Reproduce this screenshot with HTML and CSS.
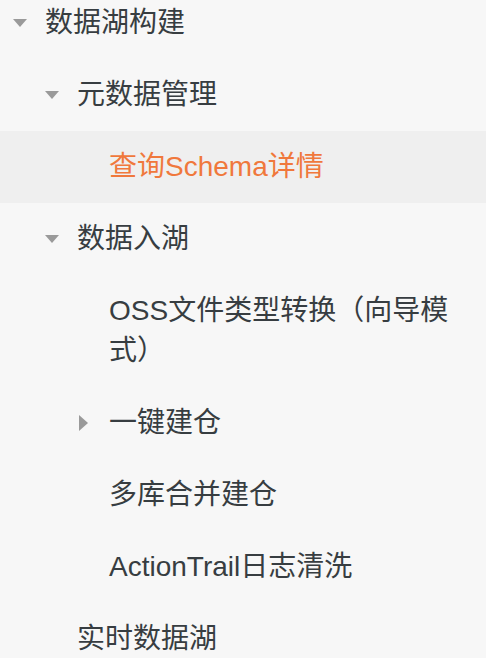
FILE: index.html
```html
<!DOCTYPE html>
<html lang="zh-CN">
<head>
<meta charset="utf-8">
<link rel="stylesheet" href="styles.css">
</head>
<body>
<nav class="tree">
  <div class="row lvl1"><span class="arrow down"></span><span class="label">数据湖构建</span></div>
  <div class="row lvl2"><span class="arrow down"></span><span class="label">元数据管理</span></div>
  <div class="row lvl3 active"><span class="arrow none"></span><span class="label">查询Schema详情</span></div>
  <div class="row lvl2"><span class="arrow down"></span><span class="label">数据入湖</span></div>
  <div class="row lvl3"><span class="arrow none"></span><span class="label">OSS文件类型转换（向导模式）</span></div>
  <div class="row lvl3"><span class="arrow right"></span><span class="label">一键建仓</span></div>
  <div class="row lvl3"><span class="arrow none"></span><span class="label">多库合并建仓</span></div>
  <div class="row lvl3"><span class="arrow none"></span><span class="label">ActionTrail日志清洗</span></div>
  <div class="row lvl2"><span class="arrow none"></span><span class="label">实时数据湖</span></div>
</nav>
</body>
</html>
```

FILE: styles.css
```css
html, body {
  margin: 0;
  padding: 0;
  background: #f7f7f7;
  overflow: hidden;
}
body {
  font-family: "Liberation Sans", "Noto Sans CJK SC", sans-serif;
  font-size: 28px;
  color: #373d41;
}
.tree {
  margin-top: -13px;
  display: flex;
  flex-direction: column;
}
.row {
  display: flex;
  align-items: flex-start;
  padding: 16px 16px 16px 0;
  line-height: 40px;
}
.row.active {
  background: #efefef;
  color: #f0783c;
}
.lvl1 { padding-left: 13px; }
.lvl2 { padding-left: 45px; }
.lvl3 { padding-left: 77px; }
.arrow {
  flex: 0 0 32px;
  height: 40px;
  position: relative;
}
.arrow.down::before {
  content: "";
  position: absolute;
  left: 0;
  top: 16px;
  border-left: 7px solid transparent;
  border-right: 7px solid transparent;
  border-top: 8px solid #9a9a9a;
}
.arrow.right::before {
  content: "";
  position: absolute;
  left: 2px;
  top: 12px;
  border-top: 8px solid transparent;
  border-bottom: 8px solid transparent;
  border-left: 9px solid #9a9a9a;
}
.label {
  flex: 1;
  min-width: 0;
}
```
